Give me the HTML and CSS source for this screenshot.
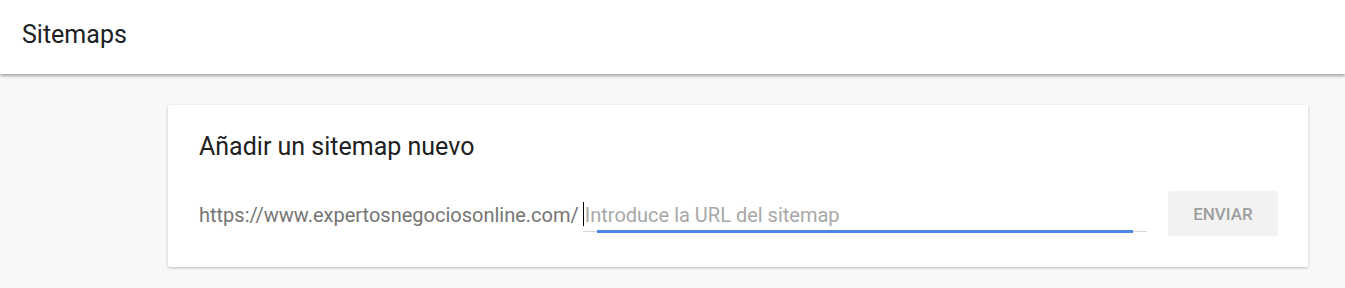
FILE: index.html
```html
<!DOCTYPE html>
<html>

<head>
    <meta charset="UTF-8">
    <title>Sitemaps</title>
    <link rel="stylesheet" href="styles.css">
</head>

<body>
    <header class="topBar">
        <h1>Sitemaps</h1>
    </header>
    <main class="content">
        <section class="card">
            <h2>Añadir un sitemap nuevo</h2>
            <form class="addRow">
                <span class="urlPrefix">https://www.expertosnegociosonline.com/</span>
                <div class="inputWrap">
                    <span class="caret"></span>
                    <input type="text" placeholder="Introduce la URL del sitemap">
                    <span class="focusLine"></span>
                </div>
                <button type="submit" disabled>ENVIAR</button>
            </form>
        </section>
    </main>
</body>

</html>
```

FILE: styles.css
```css
html {
    background: #f8f8f8;
    font-family: Roboto, Arial, sans-serif;
    color: #212121;
}
body {
    margin: 0;
    height: 288px;
    overflow: hidden;
}
.topBar {
    background: #ffffff;
    height: 74px;
    box-sizing: border-box;
    display: flex;
    align-items: center;
    padding: 0 0 5px 22px;
    box-shadow: 0 2px 3px rgba(0, 0, 0, 0.35);
    position: relative;
}
.topBar h1 {
    margin: 0;
    font-size: 25px;
    font-weight: 400;
    color: #202124;
}
.content {
    padding: 31px 37px 0 168px;
}
.card {
    background: #ffffff;
    border-radius: 2px;
    box-shadow: 0 1px 3px rgba(0, 0, 0, 0.25);
    padding: 28px 30px 31px 31px;
}
.card h2 {
    margin: 0;
    font-size: 25px;
    font-weight: 400;
    color: #212121;
    line-height: 28px;
}
.addRow {
    display: flex;
    align-items: center;
    margin-top: 30px;
}
.urlPrefix {
    font-size: 20px;
    color: #757575;
    margin-right: 4px;
    padding-top: 3px;
}
.inputWrap {
    flex: 1;
    position: relative;
    border-bottom: 1px solid #d6d6d6;
    height: 36px;
    display: flex;
    align-items: center;
}
.inputWrap input {
    border: none;
    outline: none;
    background: transparent;
    font-family: Roboto, Arial, sans-serif;
    font-size: 20px;
    width: 100%;
    padding: 4px 0 0 2px;
    color: #212121;
}
.inputWrap input::placeholder {
    color: #a8a8a8;
}
.caret {
    position: absolute;
    left: 0;
    top: 7px;
    width: 1px;
    height: 24px;
    background: #000000;
}
.focusLine {
    position: absolute;
    left: 14px;
    right: 14px;
    bottom: -2px;
    height: 3px;
    background: #4a86e8;
}
button {
    margin-left: 21px;
    width: 110px;
    height: 45px;
    border: none;
    border-radius: 2px;
    background: #f2f2f2;
    color: #9e9e9e;
    font-family: Roboto, Arial, sans-serif;
    font-size: 17px;
    font-weight: 500;
}
```
